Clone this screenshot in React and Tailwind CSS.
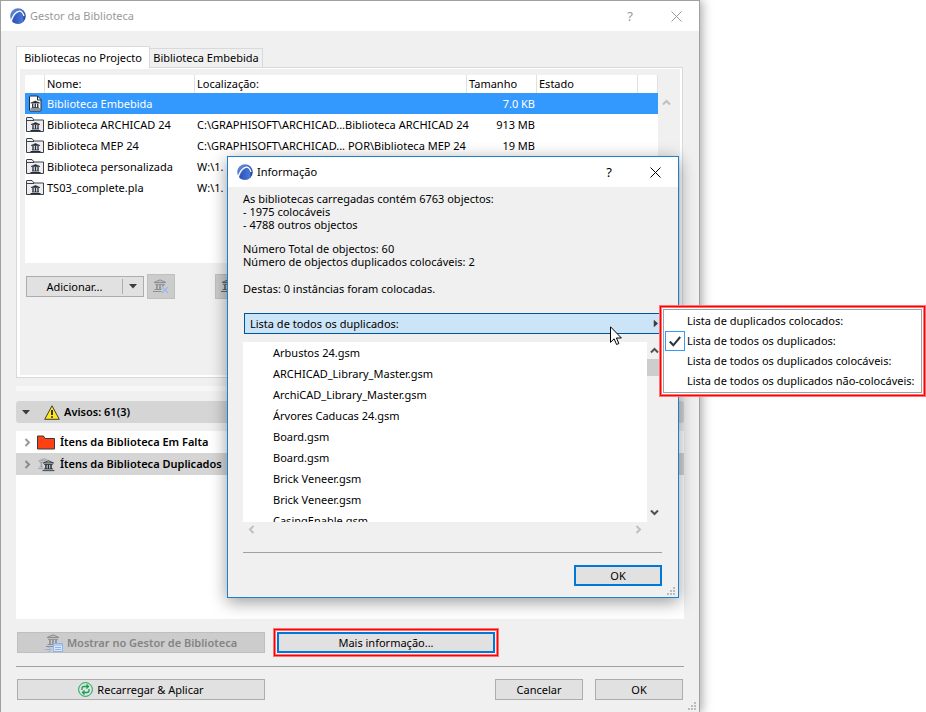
const rows = [
  { name: "Biblioteca Embebida", path: "", size: "7.0 KB", selected: true },
  { name: "Biblioteca ARCHICAD 24", path: "C:\\GRAPHISOFT\\ARCHICAD...Biblioteca ARCHICAD 24", size: "913 MB" },
  { name: "Biblioteca MEP 24", path: "C:\\GRAPHISOFT\\ARCHICAD... POR\\Biblioteca MEP 24", size: "19 MB" },
  { name: "Biblioteca personalizada", path: "W:\\1.", size: "" },
  { name: "TS03_complete.pla", path: "W:\\1.", size: "" },
];

const objects = [
  "Arbustos 24.gsm",
  "ARCHICAD_Library_Master.gsm",
  "ArchiCAD_Library_Master.gsm",
  "Árvores Caducas 24.gsm",
  "Board.gsm",
  "Board.gsm",
  "Brick Veneer.gsm",
  "Brick Veneer.gsm",
  "CasingEnable.gsm",
];

const menuItems = [
  { label: "Lista de duplicados colocados:" },
  { label: "Lista de todos os duplicados:", checked: true },
  { label: "Lista de todos os duplicados colocáveis:" },
  { label: "Lista de todos os duplicados não-colocáveis:" },
];

function AppLogo() {
  return (
    <svg className="size-4 shrink-0" viewBox="0 0 16 16" aria-hidden="true">
      <defs>
        <linearGradient id="logo" x1="0" y1="0" x2="1" y2="1">
          <stop offset="0" stopColor="#6c97ea" />
          <stop offset="1" stopColor="#16398f" />
        </linearGradient>
        <linearGradient id="sail" x1="0" y1="0" x2="1" y2="0">
          <stop offset="0" stopColor="#2c50b4" />
          <stop offset="1" stopColor="#4a7be0" />
        </linearGradient>
      </defs>
      <circle cx="8" cy="8" r="7.800" fill="url(#logo)" />
      <path d="M2.500 14C3.600 9.500 6 5.800 9.200 4.600c2.600.400 4.200 4.600 4.300 8.600C11 16.300 5.500 16.500 2.500 14z" fill="url(#sail)" />
      <path d="M1.200 12.800C2.800 8 5.600 4 9.300 3.200c2.200-.2 3.700 2 4.700 4.800" fill="none" stroke="#fff" strokeWidth="1.300" />
    </svg>
  );
}

function Temple({ color = "#222b33" }) {
  return (
    <g fill="none" stroke={color}>
      <path d="M1 3.500 7 .8 13 3.500z" fill={color} fillOpacity="0.250" />
      <path d="M2 5.300h10M1.500 10.500h11M0 12.500h14" />
      <path d="M4 5.500v5M7 5.500v5M10 5.500v5" strokeWidth="1.700" />
    </g>
  );
}

function SmallTemple() {
  return (
    <g fill="none" stroke="#222b33">
      <path d="M.5 2.500 5 .5l4.500 2z" fill="#222b33" strokeWidth=".6" />
      <path d="M0 8.500h10" />
      <path d="M1.500 7h7" strokeWidth=".8" />
      <path d="M2.500 3v4M5 3v4M7.500 3v4" strokeWidth="1.300" />
    </g>
  );
}

function FileIcon() {
  return (
    <svg width="14" height="17" viewBox="0 0 14 17" aria-hidden="true">
      <path d="M2.500 1h7L13 4.500V15q0 1-1 1H2.500q-1 0-1-1V2q0-1 1-1z" fill="#fff" stroke="#222b33" />
      <path d="M9.500 1v4H13" fill="none" stroke="#222b33" />
      <g transform="translate(2.250 5.500)"><SmallTemple /></g>
    </svg>
  );
}

function FolderIcon() {
  return (
    <svg width="18" height="16" viewBox="0 0 18 16" aria-hidden="true">
      <path d="M.5 14.500V1q0-.5.500-.5h5l2 2.500h9.500v11.500z" fill="#efedf2" stroke="#38424a" />
      <path d="M1 3.500h7" fill="none" stroke="#38424a" />
      <g transform="translate(4.500 5)"><SmallTemple /></g>
    </svg>
  );
}

function Chevron({ dir, color }) {
  const turn = { up: "", right: "rotate-90", down: "rotate-180", left: "-rotate-90" }[dir];
  return (
    <svg width="9" height="9" viewBox="0 0 9 9" className={turn} aria-hidden="true">
      <path d="M1 6.500 4.500 3 8 6.500" fill="none" stroke={color} strokeWidth="2" />
    </svg>
  );
}

function Triangle({ className = "" }) {
  return (
    <svg width="8" height="5" viewBox="0 0 8 5" className={className} aria-hidden="true">
      <path d="M0 0h8L4 4.500z" fill="#3c3c3c" />
    </svg>
  );
}

function Grip() {
  return (
    <svg width="8" height="8" viewBox="0 0 8 8" fill="#bcbcbc" className="absolute right-[3px] bottom-[2px]" aria-hidden="true">
      <path d="M6 0h2v2H6zM3 3h2v2H3zM6 3h2v2H6zM0 6h2v2H0zM3 6h2v2H3zM6 6h2v2H6z" />
    </svg>
  );
}

function TitleBar({ title, inactive }) {
  return (
    <header className={`flex h-[30px] items-center bg-white pl-[9px] ${inactive ? "text-[#999]" : "text-black"}`}>
      <AppLogo />
      <h1 className="ml-1 flex-1">{title}</h1>
      <button aria-label="Ajuda" className="w-[46px] text-[13px]">?</button>
      <button aria-label="Fechar" className="flex w-[46px] justify-center">
        <svg width="11" height="11" viewBox="0 0 11 11" aria-hidden="true">
          <path d="M.5.500l10 10M10.500.500l-10 10" stroke="currentColor" fill="none" />
        </svg>
      </button>
    </header>
  );
}

function PushButton({ className = "", children, ...rest }) {
  return (
    <button className={`flex h-[21px] items-center justify-center ${className}`} {...rest}>
      {children}
    </button>
  );
}

function LibraryTable() {
  return (
    <div className="flex h-[188px]">
      <div className="flex-1 bg-white">
        <table className="w-full table-fixed border-separate border-spacing-0 text-left">
          <colgroup>
            <col className="w-[20px]" />
            <col className="w-[150px]" />
            <col />
            <col className="w-[70px]" />
            <col className="w-[101px]" />
            <col className="w-[20px]" />
          </colgroup>
          <thead>
            <tr className="h-[18px] [&>th]:border-r [&>th]:border-[#e0e0e0] [&>th]:p-0 [&>th]:pl-[2px] [&>th]:font-normal">
              <th />
              <th>Nome:</th>
              <th>Localização:</th>
              <th>Tamanho</th>
              <th>Estado</th>
              <th />
            </tr>
          </thead>
          <tbody>
            {rows.map((r) => (
              <tr key={r.name} className={`h-[21px] whitespace-nowrap ${r.selected ? "bg-[#3399ff] text-white" : ""}`}>
                <td className="p-0">
                  <div className={r.selected ? "pl-[3px]" : "pl-px"}>{r.selected ? <FileIcon /> : <FolderIcon />}</div>
                </td>
                <td className="p-0 pl-[2px]">{r.name}</td>
                <td className="p-0 pl-[2px]">{r.path}</td>
                <td className="p-0 pr-[2px] text-right">{r.size}</td>
                <td className="p-0" />
                <td className="p-0" />
              </tr>
            ))}
          </tbody>
        </table>
      </div>
      <div className="w-[22px] pt-[23px] pl-[4px]">
        <Chevron dir="up" color="#bfbfbf" />
      </div>
    </div>
  );
}

function MainWindow() {
  return (
    <main className="relative flex min-h-screen flex-col border border-[#a0a0a0] bg-[#f0f0f0] shadow-[2px_0_10px_rgba(0,0,0,0.35)]">
      <TitleBar title="Gestor da Biblioteca" inactive />
      <div className="flex flex-1 flex-col px-[15px] pt-[15px] pb-3">
        <div role="tablist" className="flex items-end">
          <button role="tab" aria-selected="true" className="relative z-10 -mb-px h-[22px] w-[134px] border border-b-0 border-[#d9d9d9] bg-white">
            Bibliotecas no Projecto
          </button>
          <button role="tab" aria-selected="false" className="h-[19px] w-[113px] border border-b-0 border-l-0 border-[#d9d9d9]">
            Biblioteca Embebida
          </button>
        </div>
        <section className="mr-px h-[311px] border border-[#d9d9d9]">
          <div className="h-full border-2 border-t border-l-[3px] border-white pt-[6px] pl-[5px]">
            <LibraryTable />
            <div className="mt-[11px] flex items-center">
              <div className="ml-px flex h-[21px] w-[118px] border border-[#adadad] bg-[#e1e1e1]">
                <button className="flex-1">Adicionar...</button>
                <button aria-label="Mais opções" className="my-[2px] flex w-[21px] items-center justify-center border-l border-[#adadad]">
                  <Triangle />
                </button>
              </div>
              <button disabled aria-label="Remover" className="ml-[3px] flex h-[25px] w-[28px] items-center justify-center border border-[#bfbfbf] bg-[#cccccc]">
                <svg width="16" height="15" viewBox="0 0 16 15" aria-hidden="true">
                  <Temple color="#8d9093" />
                  <path d="M8.500 7.500h7v7h-7z" fill="#ccc" />
                  <path d="M9 8l6 6M15 8l-6 6" stroke="#9dbbe8" strokeWidth="1.300" />
                </svg>
              </button>
              <button disabled aria-label="Editar" className="ml-[40px] flex h-[25px] w-[28px] items-center border border-[#bfbfbf] bg-[#cccccc] pl-[5px]">
                <svg width="16" height="15" viewBox="0 0 16 15" aria-hidden="true"><Temple color="#62676b" /></svg>
              </button>
            </div>
          </div>
        </section>
        <div className="mt-2 h-[5px] bg-[#f7f7f7]" />
        <button className="mt-[10px] flex h-[22px] items-center rounded-[3px] bg-[#d5d5d5] pl-[6px] font-semibold">
          <Triangle />
          <svg width="16" height="15" viewBox="0 0 16 15" className="mr-1 ml-[14px]" aria-hidden="true">
            <path d="M8 .8 15.300 14.300H.7z" fill="#ffe81a" stroke="#3c3c3c" />
            <path d="M8 5v5M8 11.200v1.600" stroke="#222" strokeWidth="1.800" />
          </svg>
          Avisos: 61(3)
        </button>
        <ul className="mt-2 min-h-[188px] flex-1 bg-white font-semibold">
          <li className="flex h-[22px] items-center pl-[7px]">
            <Chevron dir="right" color="#9a9a9a" />
            <svg width="18" height="15" viewBox="0 0 18 15" className="mr-[5px] ml-[5px]" aria-hidden="true">
              <path d="M.5 14V1h6l1.500 2.500h9.500V14z" fill="#ff4013" stroke="#333c42" />
            </svg>
            Ítens da Biblioteca Em Falta
          </li>
          <li className="flex h-[22px] items-center bg-[#d5d5d5] pl-[7px]">
            <Chevron dir="right" color="#8a8a8a" />
            <svg width="18" height="15" viewBox="0 0 18 15" className="mr-[5px] ml-[5px]" aria-hidden="true">
              <g transform="translate(1 1) scale(.85)"><Temple color="#9a9da0" /></g>
              <path d="M6 5.500 11.500 2.500 18 5.500V15H6z" fill="#d5d5d5" />
              <g transform="translate(5.500 3) scale(.85)"><Temple /></g>
            </svg>
            Ítens da Biblioteca Duplicados
          </li>
        </ul>
        <div className="mt-[13px] mr-px ml-px flex">
          <PushButton disabled className="w-[248px] gap-1 border border-[#bfbfbf] bg-[#cccccc] font-semibold text-[#838383]">
            <svg width="18" height="18" viewBox="0 0 18 18" aria-hidden="true">
              <g transform="translate(1 0)"><Temple color="#8d9093" /></g>
              <path d="M8.500 9.500h9v8h-9z" fill="#dbe6f7" stroke="#8fb2ea" />
              <path d="M8 11h9M10 13.500h6M10 15.500h6M0 15.500h5M3.500 13l2.500 2.500L3.500 18" fill="none" stroke="#8fb2ea" />
            </svg>
            Mostrar no Gestor de Biblioteca
          </PushButton>
          <PushButton className="relative ml-3 w-[218px] border-2 border-[#0078d7] bg-[#e1e1e1]">
            <span className="pointer-events-none absolute -inset-[5px] border border-[#ff0000] shadow-[inset_0_0_0_1px_#ff7373,0_0_0_1px_#ff7373]" />
            Mais informação...
          </PushButton>
        </div>
        <hr className="mt-[13px] border-[#a0a0a0]" />
        <div className="mt-3 mr-px ml-px flex">
          <PushButton className="w-[248px] gap-1 border border-[#adadad] bg-[#e1e1e1]">
            <svg width="15" height="15" viewBox="0 0 15 15" fill="none" stroke="#12a550" aria-hidden="true">
              <circle cx="7.500" cy="7.500" r="6.900" />
              <path d="M4 8V6.500C4 5 5 4.500 6 4.500h4.500M8.500 2.500l2 2-2 2M11 7v1.500c0 1.500-1 2-2 2H4.500M6.500 8.500l-2 2 2 2" strokeWidth="1.300" />
            </svg>
            Recarregar &amp; Aplicar
          </PushButton>
          <PushButton className="ml-auto w-[88px] border border-[#adadad] bg-[#e1e1e1]">Cancelar</PushButton>
          <PushButton className="ml-3 w-[88px] border border-[#adadad] bg-[#e1e1e1]">OK</PushButton>
        </div>
      </div>
      <Grip />
    </main>
  );
}

function InfoDialog() {
  return (
    <div role="dialog" aria-label="Informação" className="absolute top-[156px] left-[227px] w-[452px] border border-[#1c80cf] bg-[#f0f0f0] shadow-[0_4px_16px_rgba(0,0,0,0.4)]">
      <TitleBar title="Informação" />
      <div className="pt-[5px] pr-4 pb-[11px] pl-[15px] leading-[13px]">
        <p>
          As bibliotecas carregadas contém 6763 objectos:
          <br />- 1975 colocáveis
          <br />- 4788 outros objectos
        </p>
        <p className="mt-[11px]">
          Número Total de objectos: 60
          <br />
          Número de objectos duplicados colocáveis: 2
        </p>
        <p className="mt-[14px]">Destas: 0 instâncias foram colocadas.</p>
        <button aria-haspopup="menu" aria-expanded="true" className="mt-[18px] ml-px flex h-[21px] w-[418px] items-center justify-between border border-[#005499] bg-[#cce4f7] pr-px pl-[5px]">
          Lista de todos os duplicados:
          <Triangle className="-rotate-90" />
        </button>
        <div className="mt-2 flex h-[180px]">
          <ul className="flex-1 overflow-hidden bg-white leading-[21px]">
            {objects.map((o, i) => (
              <li key={i} className="pl-[30px]">{o}</li>
            ))}
          </ul>
          <div className="flex w-[15px] flex-col items-center pt-1 pb-[5px]">
            <Chevron dir="up" color="#505050" />
            <div className="mt-1 mb-auto h-[17px] w-full bg-[#cdcdcd]" />
            <Chevron dir="down" color="#505050" />
          </div>
        </div>
        <div className="mr-[15px] flex justify-between px-1 pt-[3px]">
          <Chevron dir="left" color="#bfbfbf" />
          <Chevron dir="right" color="#bfbfbf" />
        </div>
        <hr className="mt-[18px] border-[#a0a0a0]" />
        <PushButton className="mt-3 ml-auto w-[88px] border-2 border-[#0078d7] bg-[#e1e1e1]">OK</PushButton>
      </div>
      <Grip />
    </div>
  );
}

function DuplicatesMenu() {
  return (
    <div className="absolute top-[306px] left-[660px] border border-[#ff0000] bg-white p-[2px] shadow-[inset_0_0_0_1px_#ff7373,0_0_0_1px_#ff7373]">
      <div role="menu" className="w-[259px] border border-[#a0a0a8] py-px">
        {menuItems.map((m) => (
          <button key={m.label} role="menuitemradio" aria-checked={!!m.checked} className="flex h-[20px] w-full items-center gap-[2px] whitespace-nowrap">
            <span className={`ml-px flex size-[20px] shrink-0 items-center justify-center ${m.checked ? "border border-[#3399ff]" : ""}`}>
              {m.checked && (
                <svg width="12" height="11" viewBox="0 0 12 11" aria-hidden="true">
                  <path d="M.8 5.500 4.300 9.300 11.200 1" fill="none" stroke="#2b353c" strokeWidth="2" />
                </svg>
              )}
            </span>
            {m.label}
          </button>
        ))}
      </div>
    </div>
  );
}

export default function App() {
  return (
    <div className="relative min-h-screen overflow-hidden bg-white pr-[226px] font-['Noto_Sans','Open_Sans',sans-serif] text-[11px] leading-[14px] text-black">
      <MainWindow />
      <InfoDialog />
      <DuplicatesMenu />
      <svg width="12" height="19" viewBox="0 0 12 19" className="absolute top-[326px] left-[610px]" aria-hidden="true">
        <path d="M.5.800v15.500l3.600-3.500 2.500 5.700 2.300-1-2.500-5.500h5z" fill="#fff" stroke="#000" />
      </svg>
    </div>
  );
}
